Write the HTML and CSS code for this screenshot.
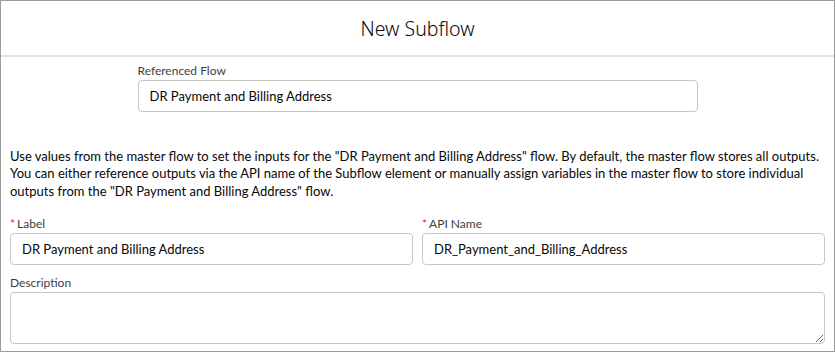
FILE: index.html
```
<!DOCTYPE html>
<html lang="en">
<head>
<meta charset="utf-8">
<title>New Subflow</title>
<link rel="stylesheet" href="styles.css">
</head>
<body>
<div class="modal">
  <header class="modal-header">
    <h2 class="modal-title">New Subflow</h2>
  </header>
  <div class="modal-body">
    <div class="ref-flow">
      <label class="field-label">Referenced Flow</label>
      <input class="text-input" type="text" value="DR Payment and Billing Address">
    </div>
    <p class="help-text">Use values from the master flow to set the inputs for the "DR Payment and Billing Address" flow. By default, the master flow stores all outputs. You can either reference outputs via the API name of the Subflow element or manually assign variables in the master flow to store individual outputs from the "DR Payment and Billing Address" flow.</p>
    <div class="field-row">
      <div class="field">
        <label class="field-label"><abbr class="required">*</abbr>Label</label>
        <input class="text-input" type="text" value="DR Payment and Billing Address">
      </div>
      <div class="field">
        <label class="field-label"><abbr class="required">*</abbr>API Name</label>
        <input class="text-input" type="text" value="DR_Payment_and_Billing_Address">
      </div>
    </div>
    <div class="field desc-field">
      <label class="field-label">Description</label>
      <textarea class="text-area"></textarea>
    </div>
  </div>
</div>
</body>
</html>
```
FILE: styles.css
```
html, body {
  margin: 0;
  padding: 0;
  background: #ffffff;
}

.modal {
  box-sizing: border-box;
  width: 835px;
  height: 352px;
  border: 1px solid #9b9b9b;
  overflow: hidden;
  font-family: Lato, "Noto Sans", sans-serif;
  color: #080707;
}

.modal-header {
  box-sizing: border-box;
  height: 56px;
  padding: 16px 0 14px;
  border-bottom: 2px solid #e2e2e2;
  text-align: center;
}

.modal-title {
  margin: 0;
  font-family: "Noto Sans", sans-serif;
  font-weight: 300;
  font-size: 19.5px;
  line-height: 24px;
  color: #080707;
}

.modal-body {
  padding: 5px 9px 0;
}

.ref-flow {
  width: 560px;
  margin: 0 auto;
  display: flex;
  flex-direction: column;
}

.field-label {
  display: block;
  font-size: 12px;
  line-height: 18px;
  color: #3e3e3c;
}

.required {
  color: #c23934;
  text-decoration: none;
  border: 0;
  margin-right: 2px;
  font-size: 12px;
}

.text-input {
  display: block;
  box-sizing: border-box;
  width: 100%;
  height: 32px;
  margin: 0;
  padding: 0 12px 0 11px;
  border: 1px solid #c9c7c5;
  border-radius: 4px;
  font-family: Lato, "Noto Sans", sans-serif;
  font-size: 13px;
  color: #080707;
  background: #ffffff;
  outline: none;
}

.help-text {
  margin: 36px 0 15px;
  font-size: 13px;
  line-height: 17.4px;
  color: #080707;
}

.field-row {
  display: grid;
  grid-template-columns: 1fr 1fr;
  column-gap: 9px;
}

.field {
  display: flex;
  flex-direction: column;
}

.desc-field {
  margin-top: 9px;
}

.text-area {
  display: block;
  box-sizing: border-box;
  width: 100%;
  height: 52px;
  margin: 0;
  padding: 6px 12px;
  border: 1px solid #c9c7c5;
  border-radius: 4px;
  font-family: Lato, "Noto Sans", sans-serif;
  font-size: 13px;
  resize: vertical;
  outline: none;
}
```
